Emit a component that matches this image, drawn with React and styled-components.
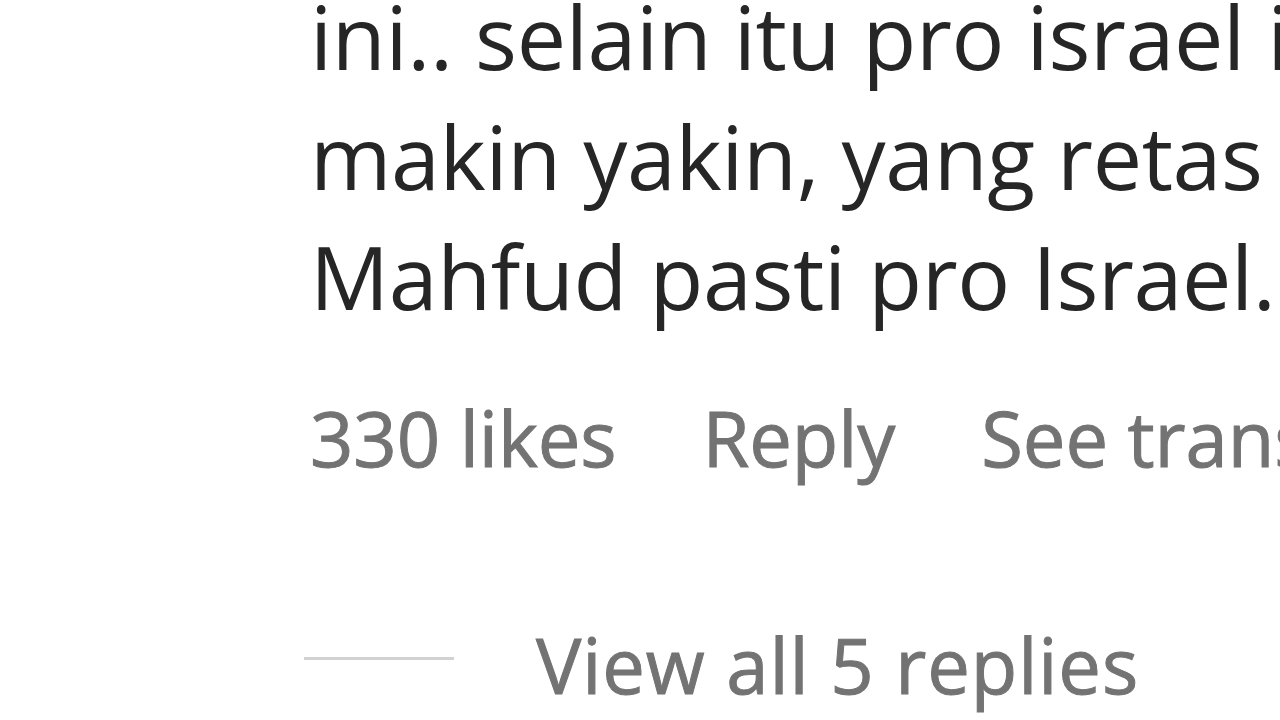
import React from 'react'
import styled, { createGlobalStyle } from 'styled-components'

const GlobalStyle = createGlobalStyle`
	html, body {
		margin: 0;
		padding: 0;
		background: #ffffff;
		overflow: hidden;
		width: 1280px;
		height: 720px;
	}
	body {
		font-family: "Open Sans", "Noto Sans", sans-serif;
	}
`

const Comment = styled.div`
	margin-top: -24px;
	padding-left: 310px;
	width: 2000px;
`

const Texto = styled.div`
	font-size: 88px;
	line-height: 120px;
	color: #262626;
	letter-spacing: -0.4px;
	white-space: nowrap;
`

const Linha = styled.div``

const Acoes = styled.div`
	display: flex;
	align-items: baseline;
	gap: 86px;
	margin-top: 52px;
	font-size: 76px;
	line-height: 100px;
	color: #737373;
	-webkit-text-stroke: 1px #737373;
	letter-spacing: -0.1px;
	white-space: nowrap;
`

const Acao = styled.span``

const Respostas = styled.div`
	display: flex;
	align-items: center;
	gap: 82px;
	margin-top: 127px;
	margin-left: -6px;
	font-size: 76px;
	line-height: 100px;
	color: #737373;
	-webkit-text-stroke: 1px #737373;
	letter-spacing: 0.9px;
	white-space: nowrap;
`

const Traco = styled.div`
	width: 150px;
	height: 3px;
	background: #d2d2d2;
	margin-top: -14px;
`

export default class App extends React.Component {
	render() {
		return (
			<>
				<GlobalStyle />
				<Comment>
					<Texto>
						<Linha>ini.. selain itu pro israel ini</Linha>
						<Linha>makin yakin, yang retas</Linha>
						<Linha>Mahfud pasti pro Israel..</Linha>
					</Texto>
					<Acoes>
						<Acao>330 likes</Acao>
						<Acao>Reply</Acao>
						<Acao>See translation</Acao>
					</Acoes>
					<Respostas>
						<Traco />
						<Acao>View all 5 replies</Acao>
					</Respostas>
				</Comment>
			</>
		)
	}
}
